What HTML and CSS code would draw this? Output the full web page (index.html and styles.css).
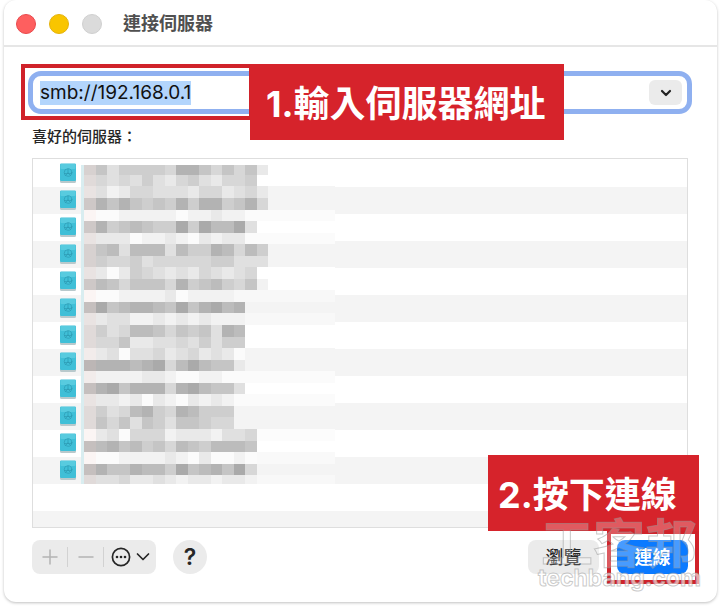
FILE: index.html
```html
<!DOCTYPE html>
<html lang="zh-Hant">
<head>
<meta charset="utf-8">
<title>連接伺服器</title>
<link rel="stylesheet" href="styles.css">
</head>
<body>
<main class="window">
  <header class="titlebar">
    <span class="light light-close"></span>
    <span class="light light-minimize"></span>
    <span class="light light-zoom"></span>
    <h1 class="title">連接伺服器</h1>
  </header>

  <form class="content">
    <div class="address">
      <input class="address-input" id="address" type="text" value="smb://192.168.0.1" aria-label="伺服器位址" spellcheck="false" autocomplete="off">
      <button class="address-menu" type="button" aria-label="最近使用的伺服器">
        <svg width="12" height="8" viewBox="0 0 12 8"><path d="M2 2l4 4 4-4"/></svg>
      </button>
      <div class="callout-frame frame-address"></div>
      <div class="callout callout-address">1.輸入伺服器網址</div>
    </div>

    <h2 class="list-label" id="favorites">喜好的伺服器：</h2>
    <div class="list">
      <ul class="rows" id="rows" aria-labelledby="favorites"></ul>
      <svg class="mosaic" id="mosaic" width="254" height="321" viewBox="0 0 254 321" aria-hidden="true"></svg>
    </div>

    <footer class="footer">
      <div class="tools">
        <button class="tool tool-muted" type="button" aria-label="加入">
          <svg width="16" height="16" viewBox="0 0 16 16"><path d="M8 1v14M1 8h14"/></svg>
        </button>
        <span class="divider"></span>
        <button class="tool tool-muted" type="button" aria-label="移除">
          <svg width="16" height="16" viewBox="0 0 16 16"><path d="M1 8h14"/></svg>
        </button>
        <span class="divider"></span>
        <button class="tool tool-more" type="button" aria-label="更多">
          <svg width="20" height="20" viewBox="0 0 20 20"><circle cx="10" cy="10" r="8.6"/><g class="dots"><circle cx="6" cy="10" r="1.3"/><circle cx="10" cy="10" r="1.3"/><circle cx="14" cy="10" r="1.3"/></g></svg>
          <svg width="14" height="10" viewBox="0 0 14 10"><path d="M1.5 2L7 7.5 12.5 2"/></svg>
        </button>
      </div>
      <button class="help" type="button" aria-label="輔助說明">?</button>
      <div class="actions">
        <button class="push" type="button">瀏覽</button>
        <button class="push push-primary" type="button">連線</button>
        <div class="callout-frame frame-connect"></div>
        <div class="callout callout-connect">2.按下連線</div>
        <div class="watermark">
          <span class="watermark-name">工客邦</span>
          <span class="watermark-site">techbang.com</span>
        </div>
      </div>
    </footer>
  </form>
</main>
<script src="script.js"></script>
</body>
</html>
```
FILE: styles.css
```css
* {
  box-sizing: border-box;
}

body {
  margin: 0;
  background: #fff;
  color: #262626;
  font-family: Inter, "Noto Sans CJK TC", sans-serif;
}

button,
input {
  margin: 0;
  padding: 0;
  border: 0;
  font: inherit;
  color: inherit;
}

svg {
  display: block;
  fill: none;
  stroke-linecap: round;
  stroke-linejoin: round;
}

.window {
  margin: 0 3px 5px 4px;
  padding-bottom: 28px;
  border-radius: 12px;
  background: #fff;
  box-shadow: 0 1px 3px rgba(0, 0, 0, 0.25);
}

.titlebar {
  display: flex;
  align-items: center;
  gap: 13px;
  height: 47px;
  padding: 2px 0 0 12px;
  border-bottom: 2px solid #e6e6e6;
}

.light {
  width: 20px;
  height: 20px;
  border-radius: 50%;
}

.light-close {
  background: #fe5f5f;
  border: 1px solid #e9494c;
}

.light-minimize {
  background: #f9c500;
  border: 1px solid #e5b30b;
}

.light-zoom {
  background: #dbdbdb;
  border: 1px solid #d0d0d0;
}

.title {
  margin: 0 0 0 8px;
  font-size: 18px;
  line-height: 24px;
  font-weight: 700;
  color: #505050;
}

.content {
  padding: 24px 29px 0 28px;
}

.address {
  position: relative;
  display: flex;
  align-items: center;
  height: 43px;
  margin: 0 -4px;
  padding: 0 5px 0 7px;
  border: 5px solid #8fb0f0;
  border-radius: 13px;
}

.address-input {
  flex: 1;
  min-width: 0;
  height: 24px;
  background: transparent;
  outline: 0;
  font-size: 19px;
  line-height: 24px;
  color: #111;
}

.address-input::selection {
  background: #b3d5fc;
  color: #111;
}

.address-menu {
  display: flex;
  align-items: center;
  justify-content: center;
  width: 33px;
  height: 25px;
  border-radius: 6px;
  background: #ebebeb;
}

.address-menu svg {
  stroke: #222;
  stroke-width: 2.2;
}

.callout {
  position: absolute;
  height: 76px;
  padding-top: 2px;
  background: #d6232b;
  color: #fff;
  font-size: 36px;
  line-height: 76px;
  font-weight: 700;
  white-space: nowrap;
}

.callout-frame {
  position: absolute;
  border: 4px solid #d0222a;
}

.frame-address {
  top: -12px;
  left: -12px;
  width: 232px;
  height: 56px;
}

.callout-address {
  top: -12px;
  left: 217px;
  width: 314px;
  padding-left: 16px;
}

.list-label {
  margin: 12px 0 10px;
  font-size: 15px;
  line-height: 22px;
  font-weight: 500;
}

.list {
  position: relative;
  padding-top: 1px;
  border: 1px solid #dedede;
}

.rows {
  margin: 0;
  padding: 0;
  list-style: none;
}

.row {
  display: flex;
  align-items: center;
  height: 27px;
  padding: 0 0 2px 26px;
}

.row:nth-child(even) {
  background: #f4f4f4;
}

.row:last-child {
  height: 16px;
}

.mosaic {
  position: absolute;
  top: 6px;
  left: 48px;
}

.footer {
  display: flex;
  align-items: center;
  margin-top: 12px;
}

.tools {
  display: flex;
  align-items: center;
  height: 34px;
  border-radius: 8px;
  background: #ebebeb;
}

.tool {
  display: flex;
  align-items: center;
  justify-content: center;
  gap: 5px;
  width: 35px;
  height: 34px;
  background: transparent;
  stroke: #262626;
  stroke-width: 1.7;
}

.tool-muted {
  stroke: #b4b4b4;
  stroke-width: 1.5;
}

.tool-more {
  width: 52px;
}

.dots {
  fill: #262626;
  stroke: none;
}

.divider {
  width: 1px;
  height: 20px;
  background: #d2d2d2;
}

.help {
  width: 34px;
  height: 34px;
  margin-left: 17px;
  border-radius: 50%;
  background: #ebebeb;
  font-size: 23px;
  line-height: 34px;
  font-weight: 600;
}

.actions {
  position: relative;
  display: flex;
  gap: 18px;
  margin-left: auto;
}

.push {
  width: 71px;
  height: 34px;
  padding-top: 2px;
  border-radius: 8px;
  background: #ebebeb;
  font-size: 18px;
  line-height: 32px;
  font-weight: 500;
}

.push-primary {
  background: #0a7aff;
  color: #fff;
  font-weight: 700;
}

.callout-connect {
  right: -11px;
  bottom: 43px;
  width: 211px;
  padding-left: 10px;
}

.frame-connect {
  top: -10px;
  right: -11px;
  width: 92px;
  height: 54px;
}

.watermark {
  position: absolute;
  top: -18px;
  right: -13px;
  color: rgba(255, 255, 255, 0.25);
  white-space: nowrap;
  -webkit-text-stroke: 1px rgba(150, 150, 150, 0.5);
}

.watermark-name,
.watermark-site {
  display: block;
  text-align: right;
}

.watermark-name {
  padding-right: 4px;
  font-size: 52px;
  line-height: 46px;
  font-weight: 700;
}

.watermark-site {
  font-size: 23px;
  line-height: 20px;
  font-weight: 700;
  color: rgba(255, 255, 255, 0.6);
}
```
FILE: script.js
```js
const ROW_COUNT = 14;
const SERVER_COUNT = 12;
const CELL = 11.55;

const discIcon = `
<svg width="18" height="20" viewBox="0 0 18 20">
  <rect x="1" y="1" width="16" height="19" rx="1.5" fill="#b9c9cc"/>
  <rect x="1" y="0.5" width="16" height="17.5" rx="1.2" fill="#40bfd7"/>
  <rect x="1.5" y="1" width="15" height="5" rx="1" fill="#58cbdf"/>
  <g stroke="#2d9bb3" stroke-width="0.7">
    <circle cx="9" cy="9.5" r="3.8"/>
    <path d="M9 6v4M5.5 10.5h7M9 10l-2.5 2.5M9 10l2.5 2.5"/>
  </g>
</svg>`;

const rows = document.getElementById("rows");
for (let i = 0; i < ROW_COUNT; i++) {
  const row = document.createElement("li");
  row.className = "row";
  if (i < SERVER_COUNT) row.innerHTML = discIcon;
  rows.append(row);
}

// Each line: tone of the band behind the cells, then one darkness digit per cell.
const bands = [
  ["#ffffff", "4635555488646462"],
  ["#ffffff", "343435324532445."],
  ["#f4f4f4", "2312443332442342"],
  ["#f4f4f4", "5868656585885684"],
  ["#fbfbfb", "00011111011211.."],
  ["#ffffff", "585676559597793."],
  ["#fbfbfb", "22220112102122.."],
  ["#f4f4f4", "4673777375587475"],
  ["#f4f4f4", "4544534444455333"],
  ["#ffffff", "220254323243234."],
  ["#ffffff", "5764666485675461"],
  ["#f8f8f8", "0001111201111..."],
  ["#f4f4f4", "69678876968978.."],
  ["#f8f8f8", "22331121212111.."],
  ["#ffffff", "35347764656387.."],
  ["#ffffff", "34462233435355.."],
  ["#f4f4f4", "12303342342320.."],
  ["#f4f4f4", "78887894797662.."],
  ["#fbfbfb", "11111221001100.."],
  ["#ffffff", "68968884897663.."],
  ["#fbfbfb", "2221202102121..."],
  ["#f4f4f4", "3534785487555..."],
  ["#f4f4f4", "3646365366544..."],
  ["#fcfcfc", "023044412221334."],
  ["#ffffff", "678675647657776."],
  ["#f9f9f9", "000111121020010."],
  ["#f4f4f4", "686687759678694."],
  ["#f8f8f8", "333422321221221."]
];

const rect = (x, y, width, height, fill) =>
  `<rect x="${x}" y="${y}" width="${width}" height="${height}" fill="${fill}"/>`;

let cells = "";
bands.forEach(([tone, levels], r) => {
  const y = r === 0 ? 0 : r * CELL - 1.7;
  const height = r === 0 ? CELL - 1.7 : Math.min(CELL, 319 - y);
  cells += rect(0, y, 254, height, tone);
  cells += rect(0, y, 3, height, "#d9edf0");
  [...levels].forEach((level, c) => {
    if (level === ".") return;
    const grey = 251 - level * 9;
    const fill = c === 0 ? `rgb(${grey},${grey - 6},${grey - 7})` : `rgb(${grey},${grey},${grey})`;
    cells += rect(3 + c * 11.5, y, 11.5, height, fill);
  });
});
const mosaic = document.getElementById("mosaic");
mosaic.setAttribute("shape-rendering", "crispEdges");
mosaic.innerHTML = cells;

const address = document.getElementById("address");
address.focus();
address.select();
```
